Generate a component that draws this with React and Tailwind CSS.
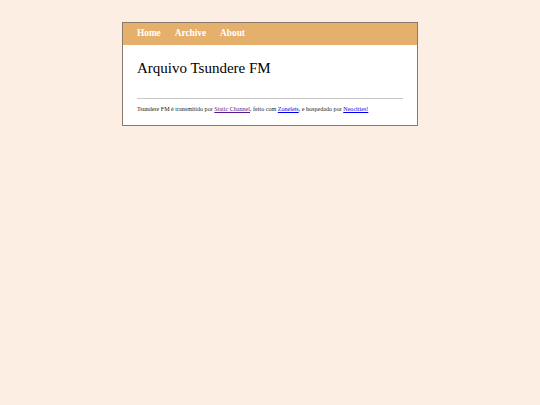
export default function App() {
  return (
    <div className="min-h-[405px] w-full bg-[#fdeee3] pt-[22px] font-['Liberation_Serif',serif]">
      <div className="mx-auto w-[296px] border border-[#8a7a6e] bg-white">
        <nav className="flex h-[22px] items-center gap-[14px] bg-[#e4b06c] px-[14px] text-[9.3px] font-bold text-white">
          <a href="#">Home</a>
          <a href="#">Archive</a>
          <a href="#">About</a>
        </nav>
        <main className="px-[14px]">
          <h1 className="mt-[14px] text-[15px] leading-[18px] text-black">Arquivo Tsundere FM</h1>
          <hr className="mt-[21px] border-[#c8c8c8]" />
          <p className="mt-[6px] mb-[12px] text-[6.1px] leading-[8px] text-[#222]">
            Tsundere FM é transmitido por{' '}
            <a href="#" className="text-[#551a8b] underline">Static Channel</a>, feito com{' '}
            <a href="#" className="text-[#0000ee] underline">Zonelets</a>, e hospedado por{' '}
            <a href="#" className="text-[#0000ee] underline">Neocities!</a>
          </p>
        </main>
      </div>
    </div>
  );
}
